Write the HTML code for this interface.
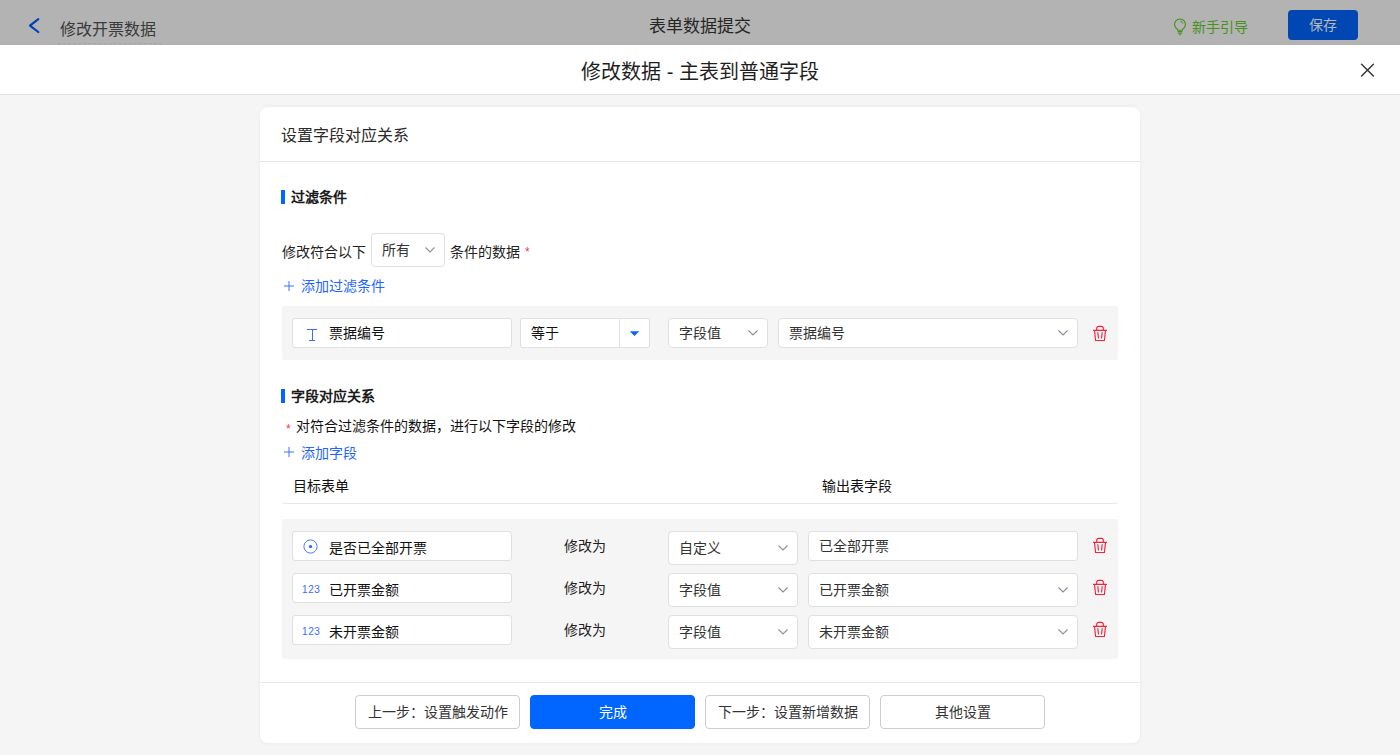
<!DOCTYPE html>
<html lang="zh-CN"><head><meta charset="utf-8">
<style>
*{box-sizing:border-box;margin:0;padding:0}
html,body{width:1400px;height:755px;overflow:hidden}
body{font-family:"Liberation Sans",sans-serif;font-size:14px;color:#111;background:#f5f5f5;position:relative}
.a{position:absolute;white-space:nowrap}
.topbar{left:0;top:0;width:1400px;height:45px;background:#b3b3b3;border-bottom:1px solid #afafaf}
.mhead{left:0;top:45px;width:1400px;height:49px;background:#fff}
.mline{left:0;top:94px;width:1400px;height:1px;background:#e2e2e2}
.card{left:260px;top:107px;width:880px;height:636px;background:#fff;border-radius:8px;box-shadow:0 0 4px rgba(0,0,0,0.06)}
.t{line-height:20px}
.box{background:#fff;border:1px solid #e0e0e0;border-radius:4px}
.grey{background:#f5f5f5;border-radius:2px}
.bar{width:4px;height:14px;background:#0066ff}
.h3{font-weight:bold;color:#1a1a1a}
.blue{color:#1f66ff}
.chev{width:10px;height:6px}
.btn{height:34px;width:165px;border:1px solid #cdcdcd;border-radius:4px;background:#fff;text-align:center;line-height:32px;color:#333}
</style></head>
<body>
<!-- top bar (masked) -->
<div class="a topbar"></div>
<svg class="a" style="left:27px;top:16px" width="14" height="18" viewBox="0 0 14 18"><path d="M11.3 3.1 L3 9.6 L11.3 16" fill="none" stroke="#0040b8" stroke-width="2.2" stroke-linecap="round" stroke-linejoin="round"/></svg>
<div class="a t" style="left:60px;top:20px;font-size:16px;color:#3a3a3a">修改开票数据</div>
<div class="a" style="left:58px;top:43px;width:104px;height:0;border-top:1px dashed #a6a6a6"></div>
<div class="a t" style="left:649px;top:17px;font-size:17px;color:#262626">表单数据提交</div>
<svg class="a" style="left:1173px;top:17px" width="14" height="19" viewBox="0 0 14 19"><path d="M4.3 12.1 A5.4 5.4 0 1 1 9.7 12.1 L9.5 13.2 H4.5 Z" fill="none" stroke="#47921a" stroke-width="1.1"/><path d="M4.6 14.6 H9.4 M4.9 16.2 H9.1 M6 17.7 H8" stroke="#47921a" stroke-width="1.1"/><path d="M7.4 4.1 A3.4 3.4 0 0 1 9.8 6.6" fill="none" stroke="#47921a" stroke-width="1"/></svg>
<div class="a t" style="left:1192px;top:17px;color:#47921a">新手引导</div>
<div class="a" style="left:1288px;top:10px;width:70px;height:30px;background:#0047b3;border-radius:4px;color:#b9b9b9;text-align:center;line-height:30px">保存</div>

<!-- modal header -->
<div class="a mhead"></div>
<div class="a mline"></div>
<div class="a t" style="left:0;width:1400px;text-align:center;top:61px;font-size:20px;line-height:22px;color:#1f1f1f">修改数据 - 主表到普通字段</div>
<svg class="a" style="left:1360px;top:63px" width="15" height="14" viewBox="0 0 15 14"><path d="M1.6 1.2 L13.4 13 M13.4 1.2 L1.6 13" stroke="#383838" stroke-width="1.5" stroke-linecap="round"/></svg>

<!-- card -->
<div class="a card"></div>
<div class="a t" style="left:281px;top:126px;font-size:16px;color:#2a2a2a">设置字段对应关系</div>
<div class="a" style="left:260px;top:161px;width:880px;height:1px;background:#e8e8e8"></div>

<!-- section 1 -->
<div class="a bar" style="left:281px;top:190px"></div>
<div class="a t h3" style="left:291px;top:187px">过滤条件</div>

<div class="a t" style="left:282px;top:242px;color:#222">修改符合以下</div>
<div class="a box" style="left:371px;top:233px;width:74px;height:34px"></div>
<div class="a t" style="left:382px;top:240px;color:#333">所有</div>
<svg class="a chev" style="left:425px;top:247px" viewBox="0 0 10 6"><path d="M0.5 0.5 L5 5 L9.5 0.5" fill="none" stroke="#8a909c" stroke-width="1.1"/></svg>
<div class="a t" style="left:450px;top:242px;color:#222">条件的数据</div>
<div class="a" style="left:525px;top:246px;color:#f0364a;font-size:12px;line-height:12px">*</div>

<svg class="a" style="left:284px;top:281px" width="10" height="10" viewBox="0 0 10 10"><path d="M5 0 V10 M0 5 H10" stroke="#3a72ff" stroke-width="1"/></svg>
<div class="a t blue" style="left:301px;top:276px">添加过滤条件</div>

<div class="a grey" style="left:282px;top:306px;width:836px;height:54px"></div>
<div class="a box" style="left:292px;top:318px;width:220px;height:30px;border-radius:3px"></div>
<svg class="a" style="left:307px;top:328px" width="10" height="14" viewBox="0 0 10 14"><path d="M0 1.5 H10 M5.5 1.5 V12.5 M2 12.5 H8" stroke="#3a6bff" stroke-width="1"/></svg>
<div class="a t" style="left:329px;top:323px">票据编号</div>
<div class="a box" style="left:520px;top:318px;width:130px;height:30px;border-radius:2px"></div>
<div class="a" style="left:619px;top:319px;width:1px;height:28px;background:#e3e3e3"></div>
<div class="a t" style="left:531px;top:323px">等于</div>
<svg class="a" style="left:629px;top:330px" width="11" height="7" viewBox="0 0 11 7"><path d="M0.8 1.2 H10.2 L5.5 6 Z" fill="#0a62ff"/></svg>
<div class="a box" style="left:668px;top:318px;width:100px;height:30px"></div>
<div class="a t" style="left:679px;top:323px;color:#333">字段值</div>
<svg class="a chev" style="left:748px;top:330px" viewBox="0 0 10 6"><path d="M0.5 0.5 L5 5 L9.5 0.5" fill="none" stroke="#8a909c" stroke-width="1.1"/></svg>
<div class="a box" style="left:778px;top:318px;width:300px;height:30px"></div>
<div class="a t" style="left:789px;top:323px;color:#333">票据编号</div>
<svg class="a chev" style="left:1058px;top:330px" viewBox="0 0 10 6"><path d="M0.5 0.5 L5 5 L9.5 0.5" fill="none" stroke="#8a909c" stroke-width="1.1"/></svg>
<svg class="a trash" style="left:1092px;top:325px" width="16" height="17" viewBox="0 0 16 17"><path d="M1 5.4 H15 M4.7 5.4 V3.3 A2 2 0 0 1 6.7 1.3 H9.3 A2 2 0 0 1 11.3 3.3 V5.4 M2.5 5.4 L3.6 15.5 H12.4 L13.5 5.4 M5.8 7.3 L6.5 13.5 M10.2 7.3 L9.5 13.5" fill="none" stroke="#f5223a" stroke-width="1.15"/></svg>

<!-- section 2 -->
<div class="a bar" style="left:281px;top:389px"></div>
<div class="a t h3" style="left:291px;top:386px">字段对应关系</div>
<div class="a" style="left:286px;top:423px;color:#f0364a;font-size:12px;line-height:12px">*</div>
<div class="a t" style="left:296px;top:416px">对符合过滤条件的数据，进行以下字段的修改</div>
<svg class="a" style="left:284px;top:447px" width="10" height="10" viewBox="0 0 10 10"><path d="M5 0 V10 M0 5 H10" stroke="#3a72ff" stroke-width="1"/></svg>
<div class="a t blue" style="left:301px;top:443px">添加字段</div>

<div class="a t" style="left:293px;top:476px">目标表单</div>
<div class="a t" style="left:822px;top:476px">输出表字段</div>
<div class="a" style="left:282px;top:503px;width:836px;height:1px;background:#e8e8e8"></div>

<div class="a grey" style="left:282px;top:519px;width:836px;height:140px"></div>
<!-- row 1 -->
<div class="a box" style="left:292px;top:531px;width:220px;height:30px;border-radius:3px"></div>
<svg class="a" style="left:303px;top:539px" width="15" height="15" viewBox="0 0 15 15"><circle cx="7.5" cy="7.5" r="6.6" fill="none" stroke="#4a78ff" stroke-width="1"/><circle cx="7.5" cy="7.5" r="1.6" fill="#1f5fff"/></svg>
<div class="a t" style="left:329px;top:538px">是否已全部开票</div>
<div class="a t" style="left:564px;top:536px;color:#222">修改为</div>
<div class="a box" style="left:668px;top:531px;width:130px;height:34px"></div>
<div class="a t" style="left:679px;top:538px;color:#333">自定义</div>
<svg class="a chev" style="left:778px;top:545px" viewBox="0 0 10 6"><path d="M0.5 0.5 L5 5 L9.5 0.5" fill="none" stroke="#8a909c" stroke-width="1.1"/></svg>
<div class="a box" style="left:808px;top:531px;width:270px;height:30px;border-radius:3px"></div>
<div class="a t" style="left:819px;top:536px;color:#333">已全部开票</div>
<svg class="a trash" style="left:1092px;top:537px" width="16" height="17" viewBox="0 0 16 17"><path d="M1 5.4 H15 M4.7 5.4 V3.3 A2 2 0 0 1 6.7 1.3 H9.3 A2 2 0 0 1 11.3 3.3 V5.4 M2.5 5.4 L3.6 15.5 H12.4 L13.5 5.4 M5.8 7.3 L6.5 13.5 M10.2 7.3 L9.5 13.5" fill="none" stroke="#f5223a" stroke-width="1.15"/></svg>
<!-- row 2 -->
<div class="a box" style="left:292px;top:573px;width:220px;height:30px;border-radius:3px"></div>
<div class="a" style="left:302px;top:584px;font-size:10px;line-height:11px;letter-spacing:0.6px;color:#3a6bff">123</div>
<div class="a t" style="left:329px;top:580px">已开票金额</div>
<div class="a t" style="left:564px;top:578px;color:#222">修改为</div>
<div class="a box" style="left:668px;top:573px;width:130px;height:34px"></div>
<div class="a t" style="left:679px;top:580px;color:#333">字段值</div>
<svg class="a chev" style="left:778px;top:587px" viewBox="0 0 10 6"><path d="M0.5 0.5 L5 5 L9.5 0.5" fill="none" stroke="#8a909c" stroke-width="1.1"/></svg>
<div class="a box" style="left:808px;top:573px;width:270px;height:34px"></div>
<div class="a t" style="left:819px;top:580px;color:#333">已开票金额</div>
<svg class="a chev" style="left:1058px;top:587px" viewBox="0 0 10 6"><path d="M0.5 0.5 L5 5 L9.5 0.5" fill="none" stroke="#8a909c" stroke-width="1.1"/></svg>
<svg class="a trash" style="left:1092px;top:579px" width="16" height="17" viewBox="0 0 16 17"><path d="M1 5.4 H15 M4.7 5.4 V3.3 A2 2 0 0 1 6.7 1.3 H9.3 A2 2 0 0 1 11.3 3.3 V5.4 M2.5 5.4 L3.6 15.5 H12.4 L13.5 5.4 M5.8 7.3 L6.5 13.5 M10.2 7.3 L9.5 13.5" fill="none" stroke="#f5223a" stroke-width="1.15"/></svg>
<!-- row 3 -->
<div class="a box" style="left:292px;top:615px;width:220px;height:30px;border-radius:3px"></div>
<div class="a" style="left:302px;top:626px;font-size:10px;line-height:11px;letter-spacing:0.6px;color:#3a6bff">123</div>
<div class="a t" style="left:329px;top:622px">未开票金额</div>
<div class="a t" style="left:564px;top:620px;color:#222">修改为</div>
<div class="a box" style="left:668px;top:615px;width:130px;height:34px"></div>
<div class="a t" style="left:679px;top:622px;color:#333">字段值</div>
<svg class="a chev" style="left:778px;top:629px" viewBox="0 0 10 6"><path d="M0.5 0.5 L5 5 L9.5 0.5" fill="none" stroke="#8a909c" stroke-width="1.1"/></svg>
<div class="a box" style="left:808px;top:615px;width:270px;height:34px"></div>
<div class="a t" style="left:819px;top:622px;color:#333">未开票金额</div>
<svg class="a chev" style="left:1058px;top:629px" viewBox="0 0 10 6"><path d="M0.5 0.5 L5 5 L9.5 0.5" fill="none" stroke="#8a909c" stroke-width="1.1"/></svg>
<svg class="a trash" style="left:1092px;top:621px" width="16" height="17" viewBox="0 0 16 17"><path d="M1 5.4 H15 M4.7 5.4 V3.3 A2 2 0 0 1 6.7 1.3 H9.3 A2 2 0 0 1 11.3 3.3 V5.4 M2.5 5.4 L3.6 15.5 H12.4 L13.5 5.4 M5.8 7.3 L6.5 13.5 M10.2 7.3 L9.5 13.5" fill="none" stroke="#f5223a" stroke-width="1.15"/></svg>

<!-- footer -->
<div class="a" style="left:260px;top:682px;width:880px;height:1px;background:#e8e8e8"></div>
<div class="a btn" style="left:355px;top:695px">上一步：设置触发动作</div>
<div class="a btn" style="left:530px;top:695px;background:#0066ff;border-color:#0066ff;color:#fff">完成</div>
<div class="a btn" style="left:705px;top:695px">下一步：设置新增数据</div>
<div class="a btn" style="left:880px;top:695px">其他设置</div>
</body></html>
